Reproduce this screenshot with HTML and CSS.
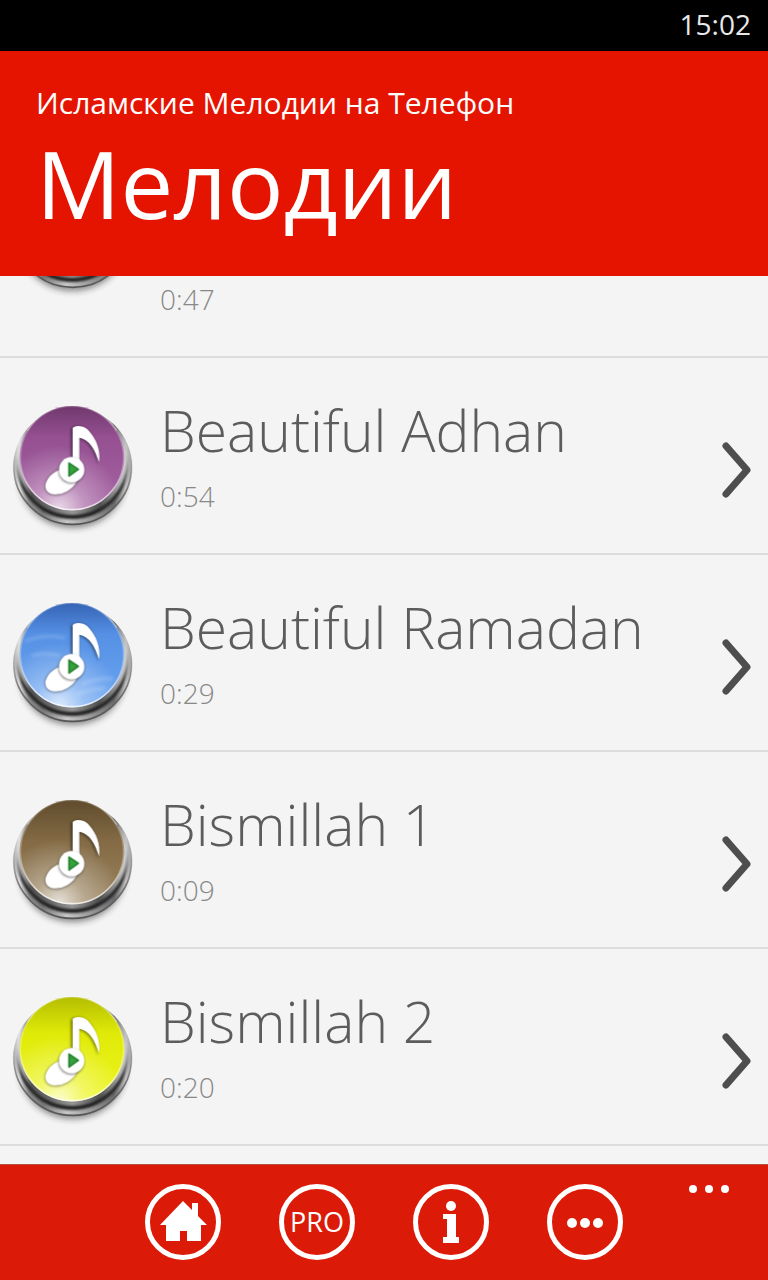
FILE: index.html
```html
<!DOCTYPE html>
<html lang="ru">
<head>
<meta charset="utf-8">
<meta name="viewport" content="width=device-width, initial-scale=1">
<title>Мелодии</title>
<link rel="stylesheet" href="styles.css">
</head>
<body>
<svg class="defs" width="0" height="0" aria-hidden="true">
  <defs>
    <linearGradient id="chrome" x1="0" y1="0" x2="1" y2="0">
      <stop offset="0" stop-color="#b0b0b0"/><stop offset=".05" stop-color="#e4e4e4"/>
      <stop offset=".13" stop-color="#8c8c8c"/><stop offset=".25" stop-color="#787878"/>
      <stop offset=".45" stop-color="#c8c8c8"/><stop offset=".65" stop-color="#9a9a9a"/>
      <stop offset=".85" stop-color="#6a6a6a"/><stop offset=".95" stop-color="#c4c4c4"/>
      <stop offset="1" stop-color="#a0a0a0"/>
    </linearGradient>
    <linearGradient id="rim" x1="0" y1="0" x2="0" y2="1">
      <stop offset=".4" stop-color="#777" stop-opacity="0"/><stop offset=".7" stop-color="#666" stop-opacity=".8"/>
      <stop offset="1" stop-color="#555"/>
    </linearGradient>
    <linearGradient id="groove" x1="0" y1="0" x2="0" y2="1">
      <stop offset=".4" stop-color="#333" stop-opacity="0"/><stop offset=".7" stop-color="#2a2a2a"/>
      <stop offset="1" stop-color="#222"/>
    </linearGradient>
    <linearGradient id="wall" x1="0" y1="0" x2="1" y2="0">
      <stop offset="0" stop-color="#d8d8d8"/><stop offset=".12" stop-color="#555"/>
      <stop offset=".3" stop-color="#6a6a6a"/><stop offset=".5" stop-color="#969696"/>
      <stop offset=".75" stop-color="#505050"/><stop offset=".88" stop-color="#8a8a8a"/>
      <stop offset="1" stop-color="#dedede"/>
    </linearGradient>
    <linearGradient id="edge" x1="0" y1="0" x2="0" y2="1">
      <stop offset="0" stop-color="#fff" stop-opacity=".1"/><stop offset=".6" stop-color="#fff" stop-opacity=".35"/>
      <stop offset="1" stop-color="#fff" stop-opacity=".75"/>
    </linearGradient>
    <radialGradient id="glow" cx=".38" cy=".98" r=".6">
      <stop offset="0" stop-color="#fff" stop-opacity=".75"/><stop offset=".4" stop-color="#fff" stop-opacity=".32"/>
      <stop offset="1" stop-color="#fff" stop-opacity="0"/>
    </radialGradient>
    <linearGradient id="purple" x1="0" y1="0" x2="0" y2="1">
      <stop offset="0" stop-color="#70376c"/><stop offset=".3" stop-color="#955092"/><stop offset="1" stop-color="#a663a3"/>
    </linearGradient>
    <linearGradient id="blue" x1="0" y1="0" x2="0" y2="1">
      <stop offset="0" stop-color="#3563b4"/><stop offset=".3" stop-color="#5590e4"/><stop offset="1" stop-color="#6ca6f2"/>
    </linearGradient>
    <linearGradient id="brown" x1="0" y1="0" x2="0" y2="1">
      <stop offset="0" stop-color="#5f4b2c"/><stop offset=".4" stop-color="#846b45"/><stop offset="1" stop-color="#9a835f"/>
    </linearGradient>
    <linearGradient id="yellow" x1="0" y1="0" x2="0" y2="1">
      <stop offset="0" stop-color="#b4bd00"/><stop offset=".35" stop-color="#e0ea08"/><stop offset="1" stop-color="#eef620"/>
    </linearGradient>
    <filter id="soft" x="-20%" y="-20%" width="140%" height="140%"><feGaussianBlur stdDeviation="9"/></filter>
    <filter id="haze" x="-20%" y="-20%" width="140%" height="140%"><feGaussianBlur stdDeviation="5"/></filter>
    <filter id="fuzz" x="-20%" y="-20%" width="140%" height="140%"><feGaussianBlur stdDeviation="3"/></filter>
    <clipPath id="flat"><rect x="0" y="48" width="450" height="402"/></clipPath>

    <symbol id="base" viewBox="0 0 450 450">
      <ellipse cx="218" cy="272" rx="158" ry="142" fill="#222" opacity=".5" filter="url(#soft)"/>
      <ellipse cx="218" cy="229" rx="178" ry="175" fill="url(#chrome)"/>
      <ellipse cx="218" cy="229" rx="177" ry="174" fill="none" stroke="url(#rim)" stroke-width="5"/>
      <ellipse cx="217" cy="226" rx="167" ry="161" fill="url(#groove)" filter="url(#fuzz)"/>
      <ellipse cx="217" cy="216" rx="162" ry="159" fill="url(#wall)" filter="url(#fuzz)"/>
    </symbol>
    <symbol id="note" viewBox="0 0 450 450">
      <g clip-path="url(#flat)">
        <circle cx="216" cy="204" r="157" fill="url(#glow)"/>
        <circle cx="216" cy="204" r="155" fill="none" stroke="url(#edge)" stroke-width="5"/>
        <path d="M82 122A157 157 0 0 1 350 122" fill="none" stroke="#fff" stroke-opacity=".4" stroke-width="4"/>
      </g>
      <g fill="#000" opacity=".5" filter="url(#haze)">
        <path d="M213 116C226 106 248 108 262 121C284 143 298 180 294 222C282 180 264 151 235 145L235 262L213 262Z"/>
        <ellipse cx="184" cy="276" rx="52" ry="34" transform="rotate(-30 184 276)"/>
      </g>
      <g fill="#fff">
        <path d="M218 114C226 105 248 106 262 118C286 142 303 178 297 217C285 178 267 148 238 143L238 260L218 260Z"/>
        <ellipse cx="185" cy="274" rx="53" ry="34" transform="rotate(-30 185 274)"/>
      </g>
      <circle cx="214" cy="242" r="39" fill="#333" opacity=".55" filter="url(#fuzz)"/>
      <circle cx="215" cy="239" r="38" fill="#fff"/>
      <path d="M207 219L235 238L207 258Z" fill="#35a13c" stroke="#23822b" stroke-width="5" stroke-linejoin="round"/>
    </symbol>
    <symbol id="chevron" viewBox="0 0 40 64">
      <path d="M10 8L31 32L10 56" fill="none" stroke="#4e4e4e" stroke-width="7" stroke-linecap="round" stroke-linejoin="round"/>
    </symbol>
  </defs>
</svg>

<div class="phone">
  <div class="status"><time>15:02</time></div>
  <header class="header">
    <p class="app-name">Исламские Мелодии на Телефон</p>
    <h1 class="title">Мелодии</h1>
  </header>

  <main class="content">
    <ul class="list">
      <li class="row row-tall">
        <svg class="badge" viewBox="0 0 450 450" aria-hidden="true"><use href="#base"/></svg>
        <span class="text"><span class="time">0:47</span></span>
      </li>
      <li><a class="row" href="#adhan">
        <svg class="badge" viewBox="0 0 450 450" aria-hidden="true"><use href="#base"/><circle cx="216" cy="204" r="157" fill="url(#purple)" clip-path="url(#flat)"/><use href="#note"/></svg>
        <span class="text"><span class="name">Beautiful Adhan</span><span class="time">0:54</span></span>
        <svg class="chevron" aria-hidden="true"><use href="#chevron"/></svg>
      </a></li>
      <li><a class="row" href="#ramadan">
        <svg class="badge" viewBox="0 0 450 450" aria-hidden="true"><use href="#base"/><circle cx="216" cy="204" r="157" fill="url(#blue)" clip-path="url(#flat)"/>
          <g fill="none" stroke="#fff" stroke-width="12" stroke-linecap="round" opacity=".14" filter="url(#haze)"><path d="M80 160Q140 140 190 152"/><path d="M100 205Q130 195 175 205"/><path d="M250 290Q290 272 335 275"/><path d="M235 320Q270 305 310 305"/></g>
          <use href="#note"/></svg>
        <span class="text"><span class="name">Beautiful Ramadan</span><span class="time">0:29</span></span>
        <svg class="chevron" aria-hidden="true"><use href="#chevron"/></svg>
      </a></li>
      <li><a class="row" href="#bismillah-1">
        <svg class="badge" viewBox="0 0 450 450" aria-hidden="true"><use href="#base"/><circle cx="216" cy="204" r="157" fill="url(#brown)" clip-path="url(#flat)"/><use href="#note"/></svg>
        <span class="text"><span class="name">Bismillah 1</span><span class="time">0:09</span></span>
        <svg class="chevron" aria-hidden="true"><use href="#chevron"/></svg>
      </a></li>
      <li><a class="row" href="#bismillah-2">
        <svg class="badge" viewBox="0 0 450 450" aria-hidden="true"><use href="#base"/><circle cx="216" cy="204" r="157" fill="url(#yellow)" clip-path="url(#flat)"/><use href="#note"/></svg>
        <span class="text"><span class="name">Bismillah 2</span><span class="time">0:20</span></span>
        <svg class="chevron" aria-hidden="true"><use href="#chevron"/></svg>
      </a></li>
    </ul>
  </main>

  <nav class="appbar">
    <div class="actions">
      <button class="round" type="button" aria-label="Home">
        <svg width="52" height="52" viewBox="0 0 52 52" fill="#fff" aria-hidden="true"><path d="M26 5L35 14V7H41V20L50 29H44V45H30V35H23V45H9V29H3Z"/></svg>
      </button>
      <button class="round" type="button">PRO</button>
      <button class="round" type="button" aria-label="Info">
        <svg width="52" height="52" viewBox="0 0 52 52" fill="#fff" aria-hidden="true"><circle cx="26" cy="10" r="5"/><path d="M18 18H31V41H34V47H18V41H22V23H18Z"/></svg>
      </button>
      <button class="round" type="button" aria-label="Other">
        <svg width="52" height="52" viewBox="0 0 52 52" fill="#fff" aria-hidden="true"><circle cx="13" cy="27" r="5"/><circle cx="26" cy="27" r="5"/><circle cx="39" cy="27" r="5"/></svg>
      </button>
    </div>
    <button class="more" type="button" aria-label="More">
      <svg width="42" height="10" viewBox="0 0 42 10" fill="#fff" aria-hidden="true"><circle cx="5" cy="5" r="4"/><circle cx="21" cy="5" r="4"/><circle cx="37" cy="5" r="4"/></svg>
    </button>
  </nav>
</div>
</body>
</html>
```
FILE: styles.css
```css
* { box-sizing: border-box; }

body {
  margin: 0;
  background: #f4f4f4;
  font-family: "Open Sans", "Noto Sans", sans-serif;
}

.defs { position: absolute; }

.phone {
  display: flex;
  flex-direction: column;
  height: 100vh;
}

.status {
  flex: none;
  padding: 4px 17px 7px;
  background: #000;
  color: #e8e8e8;
  font-size: 28px;
  line-height: 40px;
  text-align: right;
}

.header {
  flex: none;
  padding: 32px 36px 33px;
  background: #e51400;
  color: #fff;
}

.app-name {
  margin: 0;
  font-size: 30px;
  line-height: 40px;
}

.title {
  margin: 0;
  font-size: 94px;
  font-weight: 400;
  line-height: 120px;
}

.content {
  flex: 1;
  min-height: 0;
  overflow: hidden;
}

.list {
  margin: -155px 0 0;
  padding: 0;
  list-style: none;
}

.row {
  display: flex;
  height: 197px;
  padding: 32px 12px 0 0;
  border-bottom: 2px solid #dcdcdc;
  color: #5c5c5c;
  text-decoration: none;
}

.row-tall { height: 237px; }

.badge {
  flex: none;
  width: 150px;
  height: 150px;
}

.text {
  flex: 1;
  display: flex;
  flex-direction: column;
  justify-content: flex-end;
  gap: 6px;
  padding: 0 0 37px 10px;
  white-space: nowrap;
  font-weight: 300;
}

.name {
  font-size: 57px;
  line-height: 80px;
}

.time {
  color: #888;
  font-size: 28px;
  line-height: 40px;
}

.chevron {
  flex: none;
  width: 40px;
  height: 64px;
  margin-top: 48px;
}

.appbar {
  flex: none;
  display: grid;
  grid-template-columns: 1fr auto 1fr;
  padding: 19px 38px 20px;
  border-top: 1px solid #b4503f;
  background: #dc1a08;
}

.actions {
  grid-column: 2;
  display: flex;
  gap: 58px;
}

.round {
  display: flex;
  align-items: center;
  justify-content: center;
  width: 76px;
  height: 76px;
  padding: 0;
  border: 5px solid #fff;
  border-radius: 50%;
  background: none;
  color: #fff;
  font: 400 27px/32px "Open Sans", "Noto Sans", sans-serif;
}

.more {
  justify-self: end;
  align-self: start;
  display: flex;
  padding: 0;
  border: 0;
  background: none;
}
```
